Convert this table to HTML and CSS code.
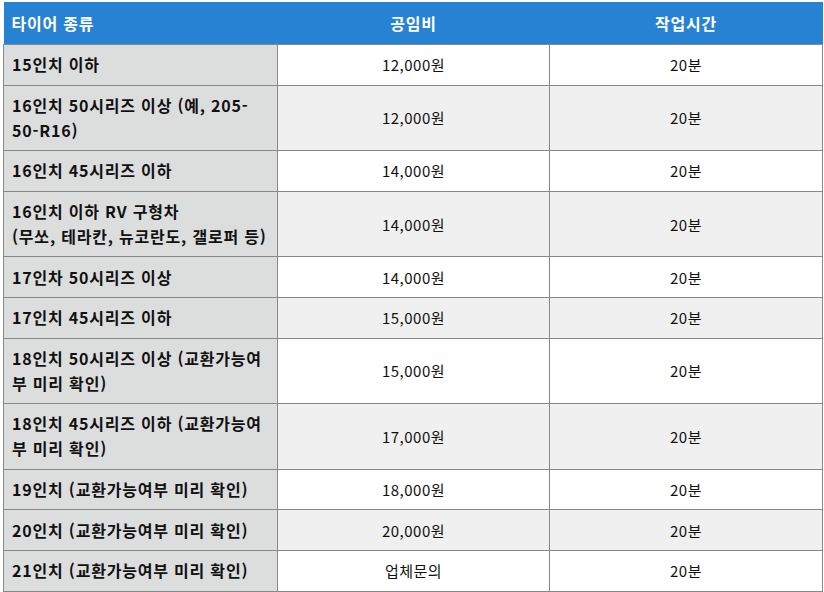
FILE: index.html
```html
<!DOCTYPE html>
<html lang="ko">
<head>
<meta charset="utf-8">
<link rel="stylesheet" href="styles.css">
</head>
<body>
<div class="wrap">
<table class="price">
  <colgroup><col class="c1"><col class="c2"><col class="c3"></colgroup>
  <thead>
    <tr><th class="left">타이어 종류</th><th>공임비</th><th>작업시간</th></tr>
  </thead>
  <tbody>
    <tr><td class="kind">15인치 이하</td><td>12,000원</td><td>20분</td></tr>
    <tr><td class="kind">16인치 50시리즈 이상 (예, 205-50-R16)</td><td>12,000원</td><td>20분</td></tr>
    <tr><td class="kind">16인치 45시리즈 이하</td><td>14,000원</td><td>20분</td></tr>
    <tr><td class="kind">16인치 이하 RV 구형차<br>(무쏘, 테라칸, 뉴코란도, 갤로퍼 등)</td><td>14,000원</td><td>20분</td></tr>
    <tr><td class="kind">17인차 50시리즈 이상</td><td>14,000원</td><td>20분</td></tr>
    <tr><td class="kind">17인치 45시리즈 이하</td><td>15,000원</td><td>20분</td></tr>
    <tr><td class="kind">18인치 50시리즈 이상 (교환가능여부 미리 확인)</td><td>15,000원</td><td>20분</td></tr>
    <tr><td class="kind">18인치 45시리즈 이하 (교환가능여부 미리 확인)</td><td>17,000원</td><td>20분</td></tr>
    <tr><td class="kind">19인치 (교환가능여부 미리 확인)</td><td>18,000원</td><td>20분</td></tr>
    <tr><td class="kind">20인치 (교환가능여부 미리 확인)</td><td>20,000원</td><td>20분</td></tr>
    <tr><td class="kind">21인치 (교환가능여부 미리 확인)</td><td>업체문의</td><td>20분</td></tr>
  </tbody>
</table>
</div>
</body>
</html>
```
FILE: styles.css
```css
html, body {
  margin: 0;
  padding: 0;
  background: #ffffff;
}
.wrap {
  padding: 2px 2px 0 3px;
}
.price {
  width: 819px;
  border-collapse: collapse;
  font-family: "Noto Sans CJK KR", "Noto Sans", sans-serif;
  font-size: 15px;
  line-height: 25px;
  color: #111111;
  table-layout: fixed;
}
.c1 { width: 274px; }
.c2 { width: 272px; }
.c3 { width: 273px; }
.price th {
  background: #2882d4;
  color: #ffffff;
  font-weight: bold;
  font-size: 16px;
  letter-spacing: 0.8px;
  height: 42px;
  padding: 0 8px;
  text-align: center;
  border: none;
}
.price th.left {
  text-align: left;
}
.price td {
  border: 1px solid #888888;
  padding: 7.3px 8px;
  text-align: center;
  vertical-align: middle;
  letter-spacing: 0.5px;
}
.price tbody tr:nth-child(even) td {
  background: #f0f0f0;
}
.price td.kind,
.price tbody tr:nth-child(even) td.kind {
  background: #dcdede;
  font-weight: bold;
  font-size: 16px;
  letter-spacing: 0.8px;
  text-align: left;
}
```
